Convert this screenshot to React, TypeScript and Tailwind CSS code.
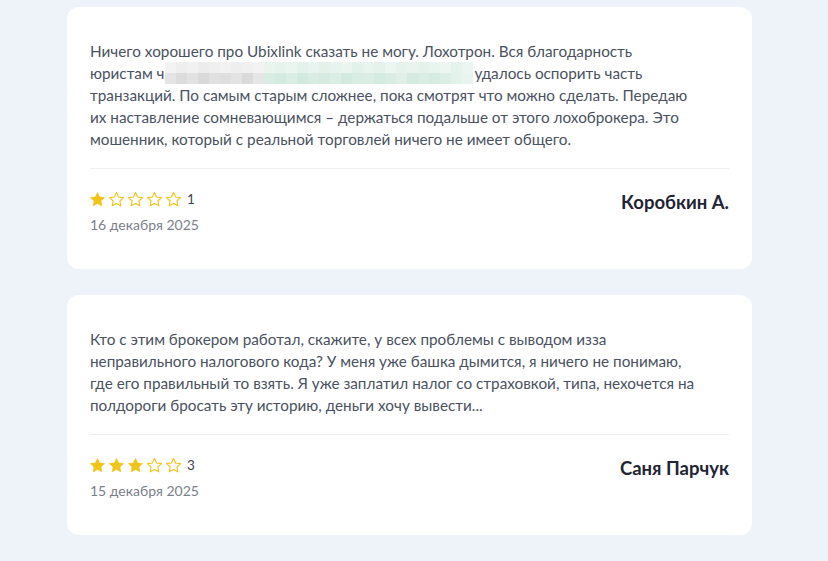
import type { ReactNode } from 'react'

const FONT = { fontFamily: 'Lato, "Noto Sans", sans-serif' }

function Star({ filled }: { filled: boolean }) {
  return (
    <svg width="17" height="17" viewBox="0 0 24 24" className="shrink-0">
      <path
        d="M12 2.2l2.95 6.3 6.9.85-5.07 4.75 1.3 6.83L12 17.6l-6.08 3.33 1.3-6.83L2.15 9.35l6.9-.85z"
        fill={filled ? '#f0c419' : 'none'}
        stroke="#f0c419"
        strokeWidth={filled ? 1 : 1.6}
        strokeLinejoin="round"
      />
    </svg>
  )
}

const BLUR_TOP = ['#f3f3f3', '#eeeeee', '#f1f1f1', '#ececec', '#efefef', '#f2f2f2', '#eeeeee', '#f0f0f0', '#f3f3f3', '#e9f4ef', '#e6f3ed', '#eaf5f0', '#e4f2ec', '#e8f4ef', '#e3f1ea', '#e7f3ee', '#eaf5f0', '#e2f1ea', '#e8f4ee', '#e5f2ec', '#ebf5f1', '#e6f3ed', '#e9f4ef', '#e4f2eb', '#e8f4ee', '#eef6f2', '#e6f3ed', '#ebf5f1']
const BLUR_BOTTOM = ['#e4e4e4', '#dcdcdc', '#e2e2e2', '#d9d9d9', '#e0e0e0', '#dedede', '#e3e3e3', '#dadada', '#e6e6e6', '#d8ede3', '#d4ebe0', '#dbeee5', '#d2eadf', '#d9ede4', '#d5ebe1', '#dcefe6', '#d3eae0', '#d8ede3', '#dbeee5', '#d4ebe1', '#d9ede4', '#e0f0e8', '#d5ebe1', '#daeee5', '#d6ece2', '#dcefe6', '#e3f2eb', '#e8f4ef']

function Blur() {
  return (
    <span className="inline-block w-[308px] h-[22px] align-top mr-[2px]">
      <span className="flex h-[11px]">
        {BLUR_TOP.map((c, i) => <span key={i} className="h-full w-[11px]" style={{ background: c }} />)}
      </span>
      <span className="flex h-[11px]">
        {BLUR_BOTTOM.map((c, i) => <span key={i} className="h-full w-[11px]" style={{ background: c }} />)}
      </span>
    </span>
  )
}

function Review({ text, rating, date, name }: { text: ReactNode; rating: number; date: string; name: string }) {
  return (
    <div className="bg-white rounded-xl px-[23px] pt-[33px] pb-[35px]">
      <p className="text-[15.3px] leading-[22px] text-[#4a5261] whitespace-nowrap">{text}</p>
      <div className="h-px bg-[#eceef1] mt-[18px]" />
      <div className="flex items-start justify-between pt-[20px]">
        <div>
          <div className="flex items-center h-[20px] gap-[2px] ml-[-1px]">
            {[1, 2, 3, 4, 5].map(n => <Star key={n} filled={n <= rating} />)}
            <span className="ml-[3px] text-[13.5px] text-[#3c4452]">{rating}</span>
          </div>
          <p className="mt-[7px] text-[14px] leading-[18px] text-[#7b808a]">{date}</p>
        </div>
        <p className="text-[18.5px] font-bold text-[#1f2533] leading-[22px] mt-[2px]">{name}</p>
      </div>
    </div>
  )
}

export default function App() {
  return (
    <div className="min-h-[561px] bg-[#eef3fa] pt-[7px]" style={FONT}>
      <div className="ml-[67px] w-[685px] flex flex-col gap-[26px]">
        <Review
          rating={1}
          date="16 декабря 2025"
          name="Коробкин А."
          text={
            <>
              Ничего хорошего про Ubixlink сказать не могу. Лохотрон. Вся благодарность
              <br />
              юристам ч<Blur />удалось оспорить часть
              <br />
              транзакций. По самым старым сложнее, пока смотрят что можно сделать. Передаю
              <br />
              их наставление сомневающимся – держаться подальше от этого лохоброкера. Это
              <br />
              мошенник, который с реальной торговлей ничего не имеет общего.
            </>
          }
        />
        <Review
          rating={3}
          date="15 декабря 2025"
          name="Саня Парчук"
          text={
            <>
              Кто с этим брокером работал, скажите, у всех проблемы с выводом изза
              <br />
              неправильного налогового кода? У меня уже башка дымится, я ничего не понимаю,
              <br />
              где его правильный то взять. Я уже заплатил налог со страховкой, типа, нехочется на
              <br />
              полдороги бросать эту историю, деньги хочу вывести...
            </>
          }
        />
      </div>
    </div>
  )
}
